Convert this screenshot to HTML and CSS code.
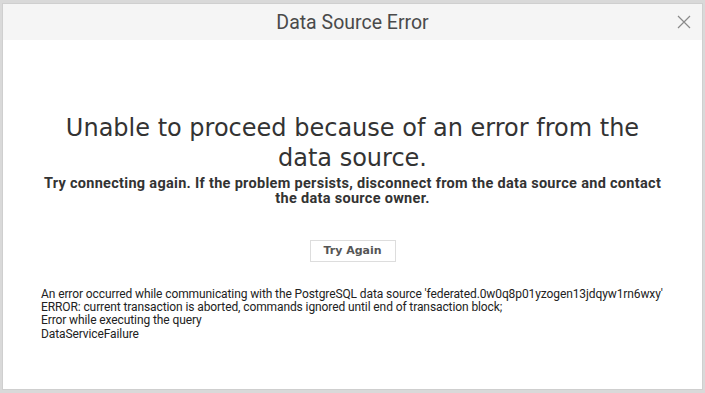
FILE: index.html
```html
<!DOCTYPE html>
<html lang="en">
<head>
  <meta charset="UTF-8">
  <title>Data Source Error</title>
  <link rel="stylesheet" href="styles.css">
</head>
<body>
<div class="dialog">
  <div class="dialog-header">
    <span class="dialog-title">Data Source Error</span>
    <button class="close" aria-label="Close">
      <svg width="14" height="14" viewBox="0 0 14 14"><path d="M1 1L13 13M13 1L1 13" stroke="#8a8a8a" stroke-width="1.2" fill="none"/></svg>
    </button>
  </div>
  <div class="dialog-body">
    <h1>Unable to proceed because of an error from the data source.</h1>
    <p class="hint">Try connecting again. If the problem persists, disconnect from the data source and contact the data source owner.</p>
    <div class="actions">
      <button class="try-button">Try Again</button>
    </div>
    <div class="details">
      <div>An error occurred while communicating with the PostgreSQL data source 'federated.0w0q8p01yzogen13jdqyw1rn6wxy'</div>
      <div>ERROR: current transaction is aborted, commands ignored until end of transaction block;</div>
      <div>Error while executing the query</div>
      <div>DataServiceFailure</div>
    </div>
  </div>
</div>
</body>
</html>
```

FILE: styles.css
```css
body {
  margin: 0;
  background: #d9d9d9;
  font-family: Roboto, "Liberation Sans", sans-serif;
}

.dialog {
  margin: 3px 2px 0 2px;
  height: 385px;
  border: 1px solid #cfcfcf;
  background: #fff;
  overflow: hidden;
}

.dialog-header {
  height: 36px;
  background: #f5f5f5;
  display: flex;
  align-items: center;
  justify-content: center;
  position: relative;
}

.dialog-title {
  font-size: 19.5px;
  color: #4a4a4a;
}

.close {
  position: absolute;
  right: 11px;
  top: 11px;
  border: none;
  background: none;
  padding: 0;
  width: 14px;
  height: 14px;
}

.dialog-body {
  padding: 73px 38px 0 38px;
  text-align: center;
}

h1 {
  font-family: "DejaVu Sans", sans-serif;
  font-weight: normal;
  font-size: 24px;
  line-height: 30px;
  color: #333;
  margin: 0 20px;
}

.hint {
  font-weight: bold;
  font-size: 14.5px;
  letter-spacing: 0.3px;
  line-height: 15px;
  color: #333;
  margin: 3px 0 0 0;
}

.actions {
  margin-top: 33px;
}

.try-button {
  font-family: "DejaVu Sans", sans-serif;
  font-weight: bold;
  font-size: 11px;
  color: #555;
  background: #fff;
  border: 1px solid #ddd;
  width: 86px;
  height: 22px;
  padding: 0;
}

.details {
  text-align: left;
  margin-top: 26px;
  font-size: 12px;
  line-height: 13.4px;
  color: #222;
  letter-spacing: -0.1px;
}
```
